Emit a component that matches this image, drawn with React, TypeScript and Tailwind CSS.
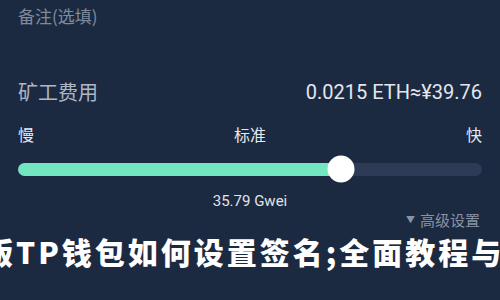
export default function App() {
  const pct = 69.7

  return (
    <div className="w-[500px] h-[300px] overflow-hidden bg-[#1c2a41] font-['Roboto','Noto_Sans_CJK_SC',sans-serif]">
      <div className="flex flex-col px-[18px]">
        {/* Remark */}
        <div className="h-[32px] flex items-center text-[17px] text-[#7f8a9c] font-['Noto_Sans_CJK_SC',sans-serif]">
          备注(选填)
        </div>

        {/* Fee */}
        <div className="mt-[40px] h-[40px] flex items-center justify-between">
          <span className="text-[20px] text-[#aeb6c3] font-['Noto_Sans_CJK_SC',sans-serif]">矿工费用</span>
          <span className="text-[20px] text-[#e3e7ed]">0.0215 ETH≈¥39.76</span>
        </div>

        {/* Speed labels */}
        <div className="mt-[12px] h-[20px] flex items-center justify-between text-[16px] text-[#e6e9ee] font-['Noto_Sans_CJK_SC',sans-serif]">
          <span>慢</span>
          <span>标准</span>
          <span>快</span>
        </div>

        {/* Slider */}
        <div className="mt-[11px] h-[28px] flex items-center">
          <div className="relative w-full h-[13px] rounded-full bg-[#2d3b56]">
            <div className="absolute left-0 top-0 h-full rounded-full bg-[#72e6c0]" style={{ width: `${pct}%` }} />
            <div
              className="absolute top-1/2 w-[27px] h-[27px] -translate-x-1/2 -translate-y-1/2 rounded-full bg-white"
              style={{ left: `${pct}%` }}
            />
          </div>
        </div>

        {/* Gwei */}
        <div className="mt-[8px] h-[20px] flex items-center justify-center text-[15px] text-[#e0e4e9]">
          35.79 Gwei
        </div>

        {/* Advanced */}
        <div className="mt-[1px] pr-[2px] h-[16px] flex items-center justify-end gap-[5px] text-[15px] text-[#8893a5] font-['Noto_Sans_CJK_SC',sans-serif]">
          <span className="text-[9px]">▼</span>
          <span>高级设置</span>
        </div>
      </div>

      {/* Title */}
      <div className="mt-[5px] h-[36px] flex items-center whitespace-nowrap">
        <span className="-ml-[17px] text-[30px] tracking-[3px] font-black text-white font-['Noto_Sans_CJK_SC',sans-serif]">
          版TP钱包如何设置签名;全面教程与指南
        </span>
      </div>
    </div>
  )
}
